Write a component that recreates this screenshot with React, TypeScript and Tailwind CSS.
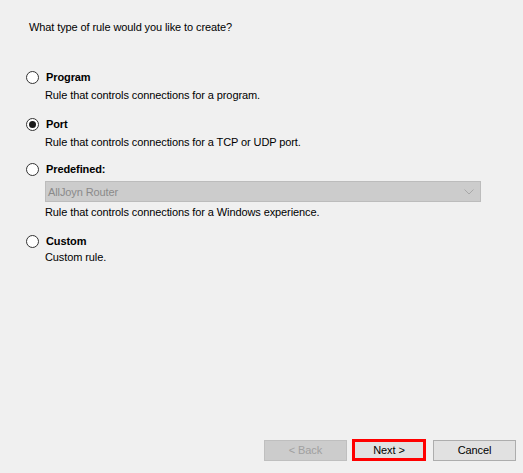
import React from "react";

function Radio({ checked }: { checked?: boolean }) {
  return (
    <span className="flex h-[13px] w-[13px] shrink-0 items-center justify-center rounded-full border border-[#333333] bg-white">
      {checked ? <span className="h-[7px] w-[7px] rounded-full bg-[#1a1a1a]" /> : null}
    </span>
  );
}

function Option({
  label,
  desc,
  checked,
  className,
  descClass,
  children,
}: {
  label: string;
  desc: string;
  checked?: boolean;
  className?: string;
  descClass?: string;
  children?: React.ReactNode;
}) {
  return (
    <div className={"flex flex-col " + (className ?? "")}>
      <div className="flex h-[16px] items-center gap-[7px]">
        <Radio checked={checked} />
        <span className="font-bold">{label}</span>
      </div>
      {children}
      <div className={"ml-[19px] h-[16px] " + (descClass ?? "mt-[2px]")}>{desc}</div>
    </div>
  );
}

export default function App() {
  return (
    <div
      className="relative h-[473px] w-[523px] overflow-hidden bg-[#f0f0f0] text-[11px] leading-[16px] tracking-[-0.1px] text-black"
      style={{ fontFamily: '"Liberation Sans", Arial, sans-serif' }}
    >
      <div className="pl-[29px] pt-[19px]">What type of rule would you like to create?</div>
      <div className="flex flex-col pl-[26px] pt-[34px]">
        <Option label="Program" desc="Rule that controls connections for a program." />
        <Option className="mt-[13px]" label="Port" desc="Rule that controls connections for a TCP or UDP port." checked />
        <Option className="mt-[11px]" label="Predefined:" desc="Rule that controls connections for a Windows experience.">
          <div className="ml-[19px] mt-[4px] flex h-[21px] w-[436px] items-center justify-between border border-[#bcbcbc] bg-[#cccccc] pl-[2px] pr-[6px] text-[#8a8a8a]">
            <span>AllJoyn Router</span>
            <svg width="10" height="6" viewBox="0 0 10 6" fill="none">
              <path d="M0.5 0.5 L5 5 L9.5 0.5" stroke="#a8a8a8" strokeWidth="1" />
            </svg>
          </div>
        </Option>
        <Option className="mt-[13px]" descClass="mt-[0px]" label="Custom" desc="Custom rule." />
      </div>
      <div className="absolute bottom-[12px] right-[7px] flex items-center">
        <button className="flex h-[21px] w-[83px] items-center justify-center border border-[#bfbfbf] bg-[#cccccc] text-[#a0a0a0]">
          &lt; Back
        </button>
        <button className="ml-[5px] flex h-[22px] w-[74px] items-center justify-center border-[3px] border-[#ff0000] bg-[#e1e1e1]">
          Next &gt;
        </button>
        <button className="ml-[7px] flex h-[21px] w-[83px] items-center justify-center border border-[#adadad] bg-[#e1e1e1]">
          Cancel
        </button>
      </div>
    </div>
  );
}
